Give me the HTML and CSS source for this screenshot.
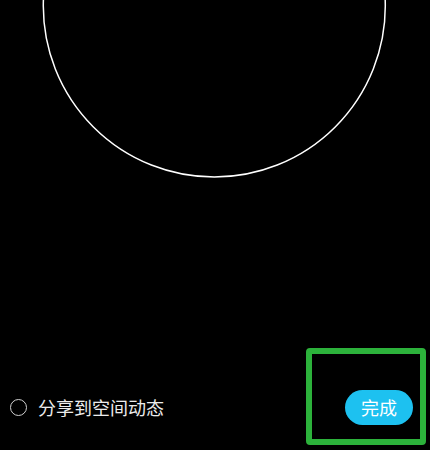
FILE: index.html
```html
<!DOCTYPE html>
<html lang="zh-CN">
<head>
<meta charset="utf-8">
<title>分享</title>
<link rel="stylesheet" href="styles.css">
</head>
<body>
<div class="page">
  <svg class="crop" width="430" height="180" viewBox="0 0 430 180" xmlns="http://www.w3.org/2000/svg">
    <circle cx="214.3" cy="6" r="171" fill="none" stroke="#ffffff" stroke-width="1.5"/>
  </svg>
  <div class="bottom">
    <label class="share">
      <span class="radio"></span>
      <span class="share-text">分享到空间动态</span>
    </label>
    <div class="highlight">
      <button class="done">完成</button>
    </div>
  </div>
</div>
</body>
</html>
```

FILE: styles.css
```css
html, body {
  margin: 0;
  padding: 0;
  background: #000;
}

.page {
  width: 430px;
  height: 450px;
  overflow: hidden;
  background: #000;
  font-family: "Noto Sans CJK SC", "Noto Sans", sans-serif;
}

.crop {
  display: block;
}

.bottom {
  display: flex;
  justify-content: space-between;
  align-items: flex-end;
  margin-top: 168px;
  padding: 0 4px 0 10px;
}

.share {
  display: flex;
  align-items: center;
  gap: 11px;
  margin-bottom: 27px;
  height: 22px;
}

.radio {
  width: 17px;
  height: 17px;
  box-sizing: border-box;
  border: 1.7px solid #d0d0d0;
  border-radius: 50%;
}

.share-text {
  color: #ececec;
  font-size: 18px;
  line-height: 22px;
}

.highlight {
  width: 120px;
  height: 97px;
  box-sizing: border-box;
  border: 6px solid #2cb23b;
  border-radius: 4px;
  display: flex;
  align-items: flex-end;
  justify-content: flex-end;
  padding: 0 7px 14px 0;
}

.done {
  width: 68px;
  height: 35px;
  border: none;
  border-radius: 18px;
  background: #1dc1f0;
  color: #ffffff;
  font-family: "Noto Sans CJK SC", "Noto Sans", sans-serif;
  font-size: 18px;
  line-height: 35px;
  padding: 0;
}
```
